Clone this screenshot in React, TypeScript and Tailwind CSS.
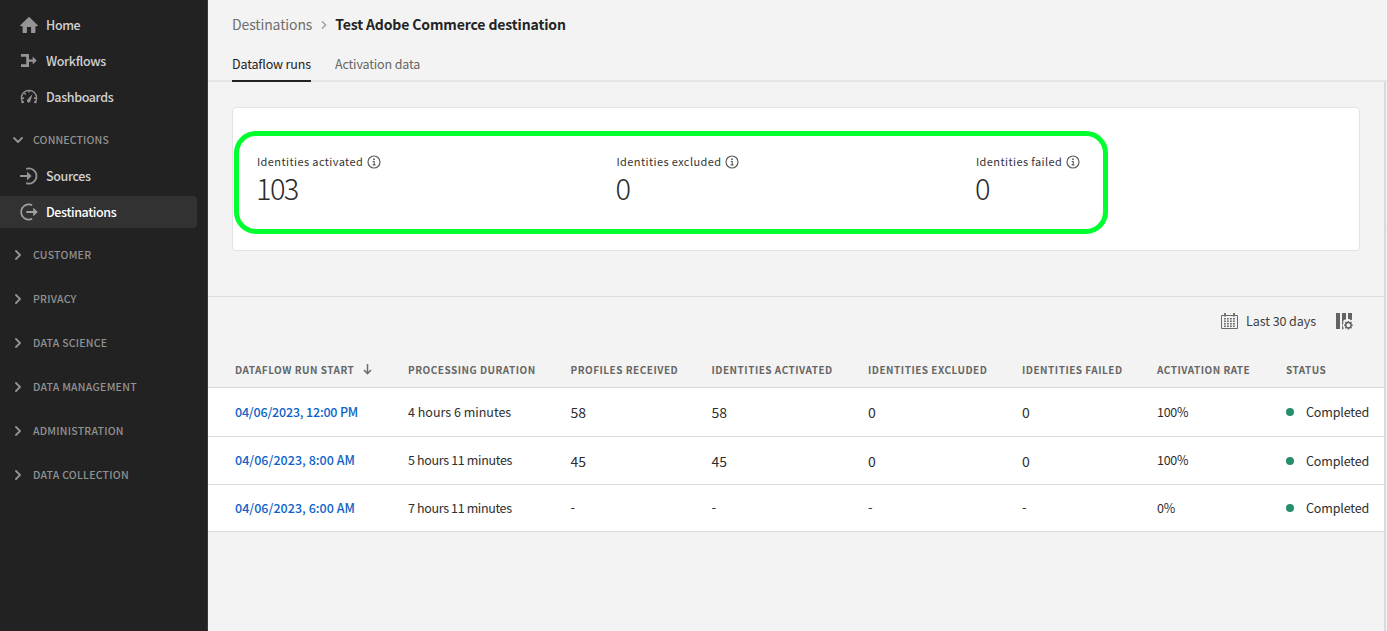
import type { ReactNode } from "react";

const HomeIcon = () => (
  <svg width="18" height="18" viewBox="0 0 18 18" fill="currentColor">
    <path d="M17.7 9.3 9.5 1.2a.7.7 0 0 0-1 0L.3 9.3a.5.5 0 0 0 .35.85H2.6v6.3c0 .3.2.5.5.5h3.8V11h4.2v5.95h3.8c.3 0 .5-.2.5-.5v-6.3h1.95a.5.5 0 0 0 .35-.85z" />
  </svg>
);

const WorkflowIcon = () => (
  <svg width="18" height="18" viewBox="0 0 18 18" fill="currentColor">
    <path d="M1 2h8v5.5h3.7V4.6l4 4-4 4V9.7H9V15H1v-2.7h5.2V4.7H1z" />
  </svg>
);

const GaugeIcon = () => (
  <svg width="18" height="18" viewBox="0 0 18 18" fill="none" stroke="currentColor">
    <path d="M3.3 15a7.6 7.6 0 1 1 11.4 0" strokeWidth="1.3" />
    <path d="M9 2.4v2.2M2 10.2h2.1M13.9 10.2H16M4.4 5.2l1.4 1.4M1.5 14.6l2.4-.9M16.5 14.6l-2.4-.9" strokeWidth="1.4" />
    <path d="M12.6 5.9 7.5 11.6a1.7 1.7 0 1 0 2.7 2z" fill="currentColor" stroke="none" />
  </svg>
);

const SourceIcon = () => (
  <svg width="18" height="18" viewBox="0 0 18 18" fill="none" stroke="currentColor">
    <path d="M6.2 1.9A7.6 7.6 0 1 1 6.2 16.1" strokeWidth="1.7" />
    <path d="M0 9h8" strokeWidth="2" />
    <path d="M7 4.6 11.6 9 7 13.4z" fill="currentColor" stroke="none" />
  </svg>
);

const DestinationIcon = () => (
  <svg width="18" height="18" viewBox="0 0 18 18" fill="none" stroke="currentColor">
    <path d="M12.2 2.2A7.6 7.6 0 1 0 12.2 15.8" strokeWidth="1.7" />
    <path d="M6.3 9H14" strokeWidth="2" />
    <path d="M13.2 4.8 17.8 9l-4.6 4.2z" fill="currentColor" stroke="none" />
  </svg>
);

const Chevron = ({ className }: { className: string }) => (
  <svg className={className} width="10" height="10" viewBox="0 0 10 10" fill="none" stroke="currentColor" strokeWidth="1.8" strokeLinecap="round" strokeLinejoin="round">
    <path d="M3 1l4 4-4 4" />
  </svg>
);

const InfoIcon = () => (
  <svg width="14" height="14" viewBox="0 0 14 14" fill="none" stroke="#5c5c5c">
    <circle cx="7" cy="7" r="6" strokeWidth="1.2" />
    <circle cx="7" cy="4.3" r=".95" fill="#5c5c5c" stroke="none" />
    <path d="M5.7 6.5h1.5v3.3M5.6 9.9h2.9" strokeWidth="1.1" />
  </svg>
);

const CalendarIcon = () => (
  <svg className="-mt-0.5" width="18" height="18" viewBox="0 0 18 18" fill="none" stroke="#6a6a6a">
    <path d="M1.5 3.5h16v13h-16z" />
    <path d="M5 1v3.4M14 1v3.4" strokeWidth="1.8" />
    <path d="M4 6.7h11M4 9.2h11M4 11.7h11M4 14.2h11" strokeWidth="1.6" strokeDasharray="1.8 1.2" />
  </svg>
);

const ColumnSettingsIcon = () => (
  <svg className="-mt-0.5" width="18" height="18" viewBox="0 0 18 18" fill="#636363">
    <path d="M1 1h4v16H1z" />
    <path d="M7 1h4v6.2l-1.9.7-1 1.4.3 2.2-1 1.2.2 1.8 1 1.2-.2 1.5H7z" />
    <path d="M13 1h4v6.8l-1.6.4-.8-1.2H13z" />
    <circle cx="13.4" cy="13.2" r="2.7" fill="none" stroke="#636363" strokeWidth="1.4" />
    <path d="M13.4 8.9v2M13.4 15.5v2M9.1 13.2h2M15.7 13.2h2M10.3 10.1l1.4 1.4M15.1 14.9l1.4 1.4M10.3 16.3l1.4-1.4M15.1 11.5l1.4-1.4" stroke="#636363" strokeWidth="1.5" />
  </svg>
);

function NavItem({ icon, label, active }: { icon: ReactNode; label: string; active?: boolean }) {
  return (
    <div className="flex h-9 items-center">
      <div className={active ? "flex h-8 w-[197px] items-center rounded-r bg-[#323232] pl-5 text-[#a0a0a0]" : "flex h-8 w-[197px] items-center pl-5 text-[#959595]"}>
        {icon}
        <span className={active ? "ml-2 text-[12.5px] font-medium tracking-[-0.38px] text-white" : "ml-2 text-[12.5px] font-medium tracking-[-0.38px] text-[#d1d1d1]"}>{label}</span>
      </div>
    </div>
  );
}

const sections = ["CUSTOMER", "PRIVACY", "DATA SCIENCE", "DATA MANAGEMENT", "ADMINISTRATION", "DATA COLLECTION"];

function Stat({ label, value }: { label: string; value: string }) {
  return (
    <div className="w-[359.5px] shrink-0">
      <div className="flex h-5 items-center gap-1 text-[11px] leading-5 tracking-[0.4px] text-[#333]">
        <span className="-mt-0.5">{label}</span>
        <InfoIcon />
      </div>
      <div className="-ml-px h-9 text-[29px] font-light leading-[30px] tracking-[-1.6px] text-[#2c2c2c]">{value}</div>
    </div>
  );
}

const columns = ["DATAFLOW RUN START", "PROCESSING DURATION", "PROFILES RECEIVED", "IDENTITIES ACTIVATED", "IDENTITIES EXCLUDED", "IDENTITIES FAILED", "ACTIVATION RATE", "STATUS"];
const grid = "grid grid-cols-[173px_162.5px_141px_156.5px_154px_135px_129px_1fr] items-center pl-[27px]";

const rows = [
  { start: "04/06/2023, 12:00 PM", duration: "4 hours 6 minutes", counts: ["58", "58", "0", "0"], rate: "100%", height: "h-[49px]", count: "text-[14px]", status: "", link: "tracking-[-0.19px]", time: "tracking-normal" },
  { start: "04/06/2023, 8:00 AM", duration: "5 hours 11 minutes", counts: ["45", "45", "0", "0"], rate: "100%", height: "h-12", count: "pt-0.5 text-[14px]", status: "pt-0.5", link: "tracking-[0.03px]", time: "tracking-[-0.34px]" },
  { start: "04/06/2023, 6:00 AM", duration: "7 hours 11 minutes", counts: ["-", "-", "-", "-"], rate: "0%", height: "h-[47px]", count: "-mt-0.5 text-[13px]", status: "", link: "tracking-[0.03px]", time: "tracking-[-0.36px]" },
];

export default function App() {
  return (
    <div className="flex h-[631px] w-[1387px] overflow-hidden bg-[#f3f3f3] font-['Noto_Sans_CJK_JP',sans-serif] leading-5">
      <nav className="w-52 shrink-0 border-r border-[#3a3a3a] bg-[#222222] pt-[7px]">
        <NavItem icon={<HomeIcon />} label="Home" />
        <NavItem icon={<WorkflowIcon />} label="Workflows" />
        <NavItem icon={<GaugeIcon />} label="Dashboards" />
        <div className="mt-[7px] flex h-9 items-center pl-[13px] text-[10.5px] font-medium tracking-[0.15px] text-[#929292]">
          <Chevron className="rotate-90" />
          <span className="ml-[10px]">CONNECTIONS</span>
        </div>
        <NavItem icon={<SourceIcon />} label="Sources" />
        <NavItem icon={<DestinationIcon />} label="Destinations" active />
        <div className="mt-[3px]">
          {sections.map((s) => (
            <div key={s} className="flex h-11 items-center pl-[13px] text-[10.5px] font-medium tracking-[0.25px] text-[#929292]">
              <Chevron className="" />
              <span className="ml-[10px]">{s}</span>
            </div>
          ))}
        </div>
      </nav>

      <div className="flex min-w-0 flex-1 flex-col">
        <header className="h-[82px] shrink-0 border-b-2 border-[#e6e6e6] pl-6">
          <div className="flex h-12 items-center text-[14px]">
            <span className="tracking-[-0.12px] text-[#6e6e6e]">Destinations</span>
            <Chevron className="ml-[7px] mr-[6px] mt-px h-2 text-[#a0a0a0]" />
            <span className="font-bold tracking-[-0.13px] text-[#242424]">Test Adobe Commerce destination</span>
          </div>
          <div className="flex h-[34px] gap-6 text-[12.5px] tracking-[-0.14px]">
            <div className="border-b-2 border-[#222] pt-[6px] text-[#222]">Dataflow runs</div>
            <div className="pt-[6px] text-[#666]">Activation data</div>
          </div>
        </header>

        <div className="flex flex-1">
          <main className="w-[1178px] shrink-0 border-r-2 border-[#dadada]">
            <div className="relative mx-6 mt-[25px] flex h-36 rounded border border-[#e3e3e3] bg-white pl-6 pt-[44px]">
              <Stat label="Identities activated" value="103" />
              <Stat label="Identities excluded" value="0" />
              <Stat label="Identities failed" value="0" />
              <div className="absolute left-px top-[23px] h-[103px] w-[874px] rounded-[22px] border-[5px] border-[#00ff2f]" />
            </div>

            <div className="mt-[45px] border-t border-[#dcdcdc]">
              <div className="flex h-[49px] items-center justify-end pr-[31px]">
                <CalendarIcon />
                <span className="-mt-0.5 ml-2 mr-[19px] text-[12.5px] tracking-[-0.07px] text-[#3e3e3e]">Last 30 days</span>
                <ColumnSettingsIcon />
              </div>
              <div className={`${grid} h-[42px] whitespace-nowrap border-b border-[#dadada] pt-[7px] text-[10px] font-bold tracking-[0.5px] text-[#666]`}>
                {columns.map((c, i) => (
                  <div key={c} className="flex items-center">
                    {c}
                    {i === 0 && (
                      <svg className="-mt-0.5 ml-[9px]" width="9" height="12" viewBox="0 0 9 12" fill="none" stroke="#6e6e6e" strokeWidth="1.5">
                        <path d="M4.5 1v9.3M1 7l3.5 3.6L8 7" />
                      </svg>
                    )}
                  </div>
                ))}
              </div>
              {rows.map((r) => (
                <div key={r.start} className={`${grid} ${r.height} whitespace-nowrap border-b border-[#dcdcdc] bg-white pb-px text-[12.5px] text-[#2e2e2e]`}>
                  <div className={`${r.link} font-medium text-[#0d62c9]`}>{r.start}</div>
                  <div className={r.time}>{r.duration}</div>
                  {r.counts.map((c, i) => (
                    <div key={i} className={r.count}>{c}</div>
                  ))}
                  <div className="tracking-[-0.3px]">{r.rate}</div>
                  <div className={`${r.status} flex items-center tracking-[-0.15px]`}>
                    <i className="mr-3 size-2 rounded-full bg-[#268e6c]" />
                    Completed
                  </div>
                </div>
              ))}
            </div>
          </main>
          <div className="mt-[145px] h-px flex-1 bg-[#dedede]" />
        </div>
      </div>
    </div>
  );
}
